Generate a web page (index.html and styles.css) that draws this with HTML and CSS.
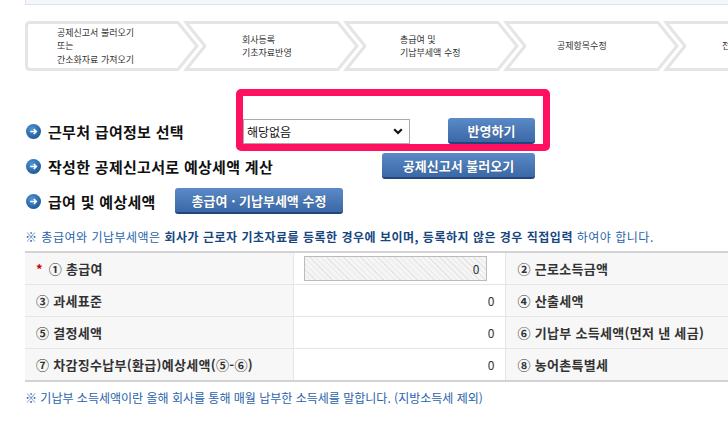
FILE: index.html
```html
<!DOCTYPE html>
<html lang="ko">
<head>
<meta charset="utf-8">
<title>근무처 급여정보</title>
<link rel="stylesheet" href="styles.css">
</head>
<body>
<div class="page">
  <div class="topbox"></div>

  <div class="steps">
    <div class="step first">
      <svg class="step-bg" width="175" height="50" viewBox="0 0 175 50"><path d="M5 1.5 H153 L172 25 L153 48.5 H5 Q1.5 48.5 1.5 45 V5 Q1.5 1.5 5 1.5 Z"/></svg>
      <div class="step-text s1"><span>공제신고서 불러오기<br>또는<br>간소화자료 가져오기</span></div>
    </div>
    <div class="step">
      <svg class="step-bg" width="174" height="50" viewBox="0 0 174 50"><path d="M0 1.5 H152 L171 25 L152 48.5 H0 L19 25 Z"/></svg>
      <div class="step-text s2"><span>회사등록<br>기초자료반영</span></div>
    </div>
    <div class="step">
      <svg class="step-bg" width="174" height="50" viewBox="0 0 174 50"><path d="M0 1.5 H152 L171 25 L152 48.5 H0 L19 25 Z"/></svg>
      <div class="step-text s3"><span>총급여 및<br>기납부세액 수정</span></div>
    </div>
    <div class="step">
      <svg class="step-bg" width="174" height="50" viewBox="0 0 174 50"><path d="M0 1.5 H152 L171 25 L152 48.5 H0 L19 25 Z"/></svg>
      <div class="step-text s4"><span>공제항목수정</span></div>
    </div>
    <div class="step">
      <svg class="step-bg" width="174" height="50" viewBox="0 0 174 50"><path d="M0 1.5 H152 L171 25 L152 48.5 H0 L19 25 Z"/></svg>
      <div class="step-text s5"><span>전자제출</span></div>
    </div>
  </div>

  <div class="rows">
    <div class="row row1">
      <div class="heading">
        <svg class="bullet" viewBox="0 0 15 15"><defs><radialGradient id="g1" cx="40%" cy="35%" r="70%"><stop offset="0" stop-color="#4f97d8"/><stop offset="1" stop-color="#1b5594"/></radialGradient></defs><circle cx="7.5" cy="7.5" r="7.5" fill="url(#g1)"/><path d="M4.2 7.5 H10.3 M7.8 5 L10.3 7.5 L7.8 10" stroke="#fff" stroke-width="1.6" fill="none"/></svg>
        <span>근무처 급여정보 선택</span>
      </div>
      <div class="select">
        <span>해당없음</span>
        <svg width="10" height="7" viewBox="0 0 10 7"><path d="M1.2 1.2 L5 5 L8.8 1.2" stroke="#111" stroke-width="2.2" fill="none"/></svg>
      </div>
      <div class="btn btn-apply">반영하기</div>
    </div>
    <div class="row row2">
      <div class="heading">
        <svg class="bullet" viewBox="0 0 15 15"><defs><radialGradient id="g2" cx="40%" cy="35%" r="70%"><stop offset="0" stop-color="#4f97d8"/><stop offset="1" stop-color="#1b5594"/></radialGradient></defs><circle cx="7.5" cy="7.5" r="7.5" fill="url(#g2)"/><path d="M4.2 7.5 H10.3 M7.8 5 L10.3 7.5 L7.8 10" stroke="#fff" stroke-width="1.6" fill="none"/></svg>
        <span>작성한 공제신고서로 예상세액 계산</span>
      </div>
      <div class="btn btn-load">공제신고서 불러오기</div>
    </div>
    <div class="row row3">
      <div class="heading">
        <svg class="bullet" viewBox="0 0 15 15"><defs><radialGradient id="g3" cx="40%" cy="35%" r="70%"><stop offset="0" stop-color="#4f97d8"/><stop offset="1" stop-color="#1b5594"/></radialGradient></defs><circle cx="7.5" cy="7.5" r="7.5" fill="url(#g3)"/><path d="M4.2 7.5 H10.3 M7.8 5 L10.3 7.5 L7.8 10" stroke="#fff" stroke-width="1.6" fill="none"/></svg>
        <span>급여 및 예상세액</span>
      </div>
      <div class="btn btn-edit">총급여 · 기납부세액 수정</div>
    </div>
  </div>

  <div class="highlight"></div>

  <p class="note">※ 총급여와 기납부세액은 <b>회사가 근로자 기초자료를 등록한 경우에 보이며, 등록하지 않은 경우 직접입력</b> 하여야 합니다.</p>

  <table class="sum">
    <colgroup><col class="c1"><col class="c2"><col class="c3"><col class="c4"></colgroup>
    <tr>
      <th><span class="req">*</span> ① 총급여</th>
      <td><div class="hatch">0</div></td>
      <th>② 근로소득금액</th>
      <td></td>
    </tr>
    <tr>
      <th>③ 과세표준</th>
      <td class="num">0</td>
      <th>④ 산출세액</th>
      <td></td>
    </tr>
    <tr>
      <th>⑤ 결정세액</th>
      <td class="num">0</td>
      <th>⑥ 기납부 소득세액(먼저 낸 세금)</th>
      <td></td>
    </tr>
    <tr>
      <th>⑦ 차감징수납부(환급)예상세액(⑤-⑥)</th>
      <td class="num">0</td>
      <th>⑧ 농어촌특별세</th>
      <td></td>
    </tr>
  </table>

  <p class="foot">※ 기납부 소득세액이란 올해 회사를 통해 매월 납부한 소득세를 말합니다. (지방소득세 제외)</p>
</div>
</body>
</html>
```

FILE: styles.css
```css
html, body {
  margin: 0;
  padding: 0;
  background: #fff;
  overflow: hidden;
}
body {
  width: 728px;
  height: 422px;
  font-family: "Noto Sans CJK KR", "Noto Sans", sans-serif;
  color: #222;
}
.page {
  position: relative;
  padding-left: 25px;
}
.topbox {
  height: 4px;
  background: #f4f8fc;
  border-left: 1px solid #dbe4ee;
  border-bottom: 1px solid #dbe4ee;
}

/* steps */
.steps {
  display: flex;
  margin-top: 16px;
  height: 50px;
}
.step {
  display: grid;
  flex: none;
  width: 174px;
  height: 50px;
  margin-left: -14px;
}
.step.first {
  width: 175px;
  margin-left: 0;
}
.step > * {
  grid-area: 1 / 1;
}
.step-bg {
  overflow: visible;
}
.step-bg path {
  fill: #fff;
  stroke: #e5e5e5;
  stroke-width: 3;
}
.step-text {
  display: flex;
  align-items: center;
  padding-left: 55px;
  font-size: 9px;
  line-height: 13.1px;
  color: #333;
  white-space: nowrap;
}
.step-text.s1 { padding-left: 32px; }
.step-text.s2 { padding-left: 56px; }
.step-text.s3 { padding-left: 54px; }
.step-text.s4 { padding-left: 51px; }
.step-text.s5 { padding-left: 56px; }

/* heading rows */
.rows {
  display: flex;
  flex-direction: column;
  gap: 9px;
  margin-top: 47px;
}
.row {
  display: flex;
  align-items: center;
  height: 26px;
}
.heading {
  display: flex;
  align-items: center;
  gap: 7px;
  font-size: 15px;
  font-weight: bold;
  color: #111;
  letter-spacing: 0.3px;
  white-space: nowrap;
}
.bullet {
  width: 15px;
  height: 15px;
  margin-left: 1px;
  flex: none;
}
.row1 .heading { width: 218px; }
.row2 .heading { width: 357px; }
.row3 .heading { width: 150px; }

.select {
  display: flex;
  align-items: center;
  justify-content: space-between;
  box-sizing: border-box;
  width: 167px;
  height: 25px;
  padding: 0 6px 0 3px;
  border: 1px solid #aaa;
  background: #fff;
  font-size: 12px;
  color: #111;
}
.btn {
  display: flex;
  align-items: center;
  justify-content: center;
  box-sizing: border-box;
  height: 26px;
  border-radius: 3px;
  border-bottom: 2px solid #21467a;
  background: linear-gradient(#5a8ac7, #3b68a6);
  color: #fff;
  font-size: 13px;
  font-weight: bold;
  white-space: nowrap;
  text-shadow: 0 0 1px rgba(0, 0, 0, 0.3);
}
.btn-apply { width: 87px; margin-left: 38px; }
.btn-load { width: 153px; }
.btn-edit { width: 168px; }

.highlight {
  position: absolute;
  left: 236px;
  top: 89px;
  width: 314px;
  height: 62px;
  box-sizing: border-box;
  border: 7px solid #ff1160;
  border-radius: 5px;
}

/* notes */
.note, .foot {
  margin: 0;
  font-size: 12px;
  line-height: 16px;
  color: #2863aa;
  white-space: nowrap;
}
.note {
  margin-top: 15px;
  letter-spacing: 0.5px;
}
.note b {
  color: #17467f;
}
.foot {
  margin-top: 8px;
}

/* table */
.sum {
  margin-top: 6px;
  width: 903px;
  table-layout: fixed;
  border-collapse: collapse;
  border-top: 2px solid #d3d3d3;
  border-bottom: 2px solid #d3d3d3;
}
.c1 { width: 268px; }
.c2 { width: 212px; }
.c3 { width: 240px; }
.c4 { width: 183px; }
.sum th, .sum td {
  height: 31px;
  padding: 0;
  border-top: 1px solid #e6e6e6;
  border-bottom: 1px solid #e6e6e6;
  border-left: 1px solid #e6e6e6;
  white-space: nowrap;
}
.sum tr > :first-child {
  border-left: none;
}
.sum th {
  background: #f7f7f7;
  text-align: left;
  font-size: 13px;
  font-weight: bold;
  color: #333;
  letter-spacing: 0.3px;
  padding-left: 11px;
}
.sum tr > th:nth-child(3) {
  padding-left: 12px;
}
.req {
  color: #d40000;
  margin-right: 2px;
}
.sum td {
  background: #fff;
  font-size: 12px;
  color: #333;
}
.sum td.num {
  text-align: right;
  padding-right: 10px;
}
.hatch {
  box-sizing: border-box;
  width: 183px;
  height: 25px;
  margin-left: 10px;
  border: 1px solid #bbb;
  background: repeating-linear-gradient(45deg, #f5f5f5 0 3px, #e6e6e6 3px 4px);
  text-align: right;
  padding-right: 6px;
  line-height: 23px;
  font-size: 12px;
  color: #333;
}
```
